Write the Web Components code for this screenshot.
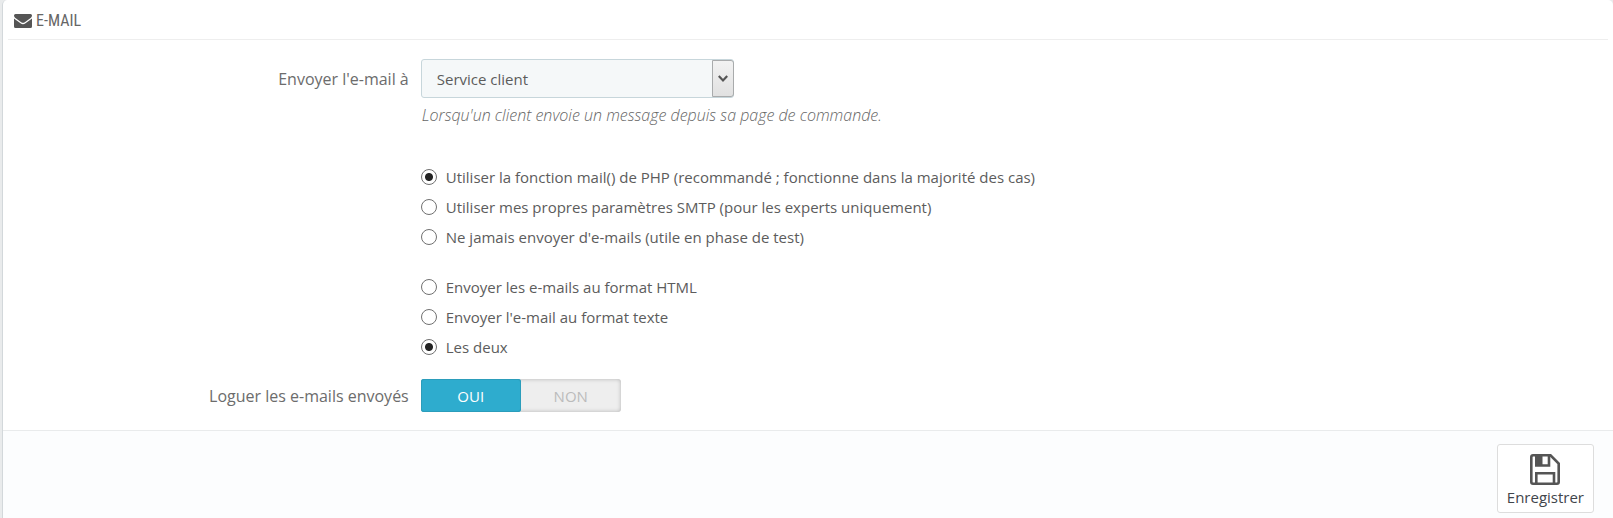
<!DOCTYPE html>
<html lang="fr">
<head>
<meta charset="utf-8">
<title>E-mail</title>
<style>
html, body { height: 100%; margin: 0; }
body { background: #e9ebec; font-family: "Open Sans", "Noto Sans", sans-serif; font-size: 15px; line-height: 20px; color: #5c5c5c; }
</style>
</head>
<body>
<settings-panel heading="E-MAIL">
  <form-row label="Envoyer l'e-mail à">
    <select-field label="Envoyer l'e-mail à"></select-field>
  </form-row>
  <form-row>
    <radio-group name="method" label="Méthode d'envoi" value="0"
      options="Utiliser la fonction mail() de PHP (recommandé ; fonctionne dans la majorité des cas)|Utiliser mes propres paramètres SMTP (pour les experts uniquement)|Ne jamais envoyer d'e-mails (utile en phase de test)"></radio-group>
  </form-row>
  <form-row>
    <radio-group name="format" label="Format des e-mails" value="2"
      options="Envoyer les e-mails au format HTML|Envoyer l'e-mail au format texte|Les deux"></radio-group>
  </form-row>
  <form-row label="Loguer les e-mails envoyés" compact>
    <toggle-switch label="Loguer les e-mails envoyés"></toggle-switch>
  </form-row>
  <save-button slot="footer">Enregistrer</save-button>
</settings-panel>
<script>
class BaseElement extends HTMLElement {
  render(html) {
    if (!this.shadowRoot) this.attachShadow({ mode: 'open' });
    this.shadowRoot.innerHTML = html;
  }
}

customElements.define('settings-panel', class extends BaseElement {
  connectedCallback() {
    this.render(`
      <style>
        :host { display: flex; flex-direction: column; box-sizing: border-box; min-height: 100%; margin-left: 2px; border-left: 1px solid #d3d8db; border-top-left-radius: 5px; border-top-right-radius: 5px; background: #fff; }
        header { display: flex; align-items: center; gap: 4px; height: 39px; margin: 0 5px; padding-left: 6px; border-bottom: 1px solid #eee; }
        header svg { margin-top: 3px; }
        h3 { margin: 0; padding-top: 3px; font: 400 16px/24px "Roboto Condensed", "Roboto", sans-serif; color: #666; }
        .body { display: grid; gap: 17px; padding: 19px 5px 18px 10px; }
        footer { flex: 1; display: flex; justify-content: flex-end; align-items: flex-start; padding: 13px 19px 4px; border-top: 1px solid #e9ebec; background: #fcfdfe; }
      </style>
      <header>
        <svg width="18" height="14" viewBox="0 0 18 14" aria-hidden="true" fill="#555">
          <path d="M1.5 0h15Q18 0 18 1.500C18 2.700 17.200 3.600 16.300 4.300L10.800 8.200Q9 9.500 7.200 8.200L1.700 4.300C.8 3.600 0 2.700 0 1.500Q0 0 1.500 0Z"/>
          <path d="M0 4.500Q.6 5.100 1.300 5.600L6.500 9.300Q9 11.100 11.500 9.300L16.700 5.600Q17.400 5.100 18 4.500V12.500Q18 14 16.500 14H1.500Q0 14 0 12.500Z"/>
        </svg>
        <h3>${this.getAttribute('heading')}</h3>
      </header>
      <div class="body"><slot></slot></div>
      <footer><slot name="footer"></slot></footer>`);
  }
});

customElements.define('form-row', class extends BaseElement {
  connectedCallback() {
    const label = this.getAttribute('label') || '';
    this.render(`
      <style>
        :host { display: grid; grid-template-columns: minmax(0, 1fr) minmax(0, 3fr); column-gap: 12px; }
        .label { padding-top: 8px; font-size: 16px; line-height: 24px; text-align: right; color: #6c6c6c; }
        :host([compact]) .label { padding-top: 5px; }
      </style>
      <div class="label">${label}</div>
      <slot></slot>`);
  }
});

customElements.define('select-field', class extends BaseElement {
  connectedCallback() {
    this.render(`
      <style>
        :host { display: block; padding-bottom: 17px; }
        .box { position: relative; width: 313px; max-width: 100%; }
        select { display: block; box-sizing: border-box; width: 100%; height: 39px; padding: 0 32px 0 15px; border: 1px solid #c7d6db; border-radius: 3px; background: #f5f8f9; color: #5c5c5c; font: inherit; appearance: none; }
        .arrow { position: absolute; top: 1px; right: 0; bottom: 1px; box-sizing: border-box; width: 22px; display: grid; place-items: center; border: 1px solid #a9abac; border-radius: 0 3px 3px 0; background: linear-gradient(#f2f2f2, #e1e1e1); pointer-events: none; }
        p { margin: 7px 0 0 1px; font-size: 16px; font-style: italic; font-weight: 300; color: #666; }
      </style>
      <div class="box">
        <select aria-label="${this.getAttribute('label')}" aria-describedby="help"><option>Service client</option></select>
        <span class="arrow"><svg width="10" height="8" viewBox="0 0 10 8" fill="none" stroke="#555" stroke-width="2.200"><path d="M.8 1L5 5.500 9.200 1"/></svg></span>
      </div>
      <p id="help">Lorsqu'un client envoie un message depuis sa page de commande.</p>`);
  }
});

customElements.define('radio-group', class extends BaseElement {
  connectedCallback() {
    const name = this.getAttribute('name');
    const value = Number(this.getAttribute('value'));
    const rows = this.getAttribute('options').split('|').map((text, i) => `
      <label for="${name}-${i}"><input type="radio" id="${name}-${i}" name="${name}"${i === value ? ' checked' : ''}>${text}</label>`).join('');
    this.render(`
      <style>
        :host { display: block; }
        .group { display: grid; justify-items: start; padding-top: 3px; }
        label { display: flex; align-items: center; gap: 9px; min-height: 30px; }
        input { flex: none; appearance: none; box-sizing: border-box; width: 16px; height: 16px; margin: 0; border: 1px solid #707070; border-radius: 50%; background: #fff; }
        input:checked { background: radial-gradient(circle, #222 0 3.500px, #fff 4.500px); }
      </style>
      <div class="group" role="radiogroup" aria-label="${this.getAttribute('label')}">${rows}</div>`);
  }
});

customElements.define('toggle-switch', class extends BaseElement {
  connectedCallback() {
    this.render(`
      <style>
        :host { display: block; }
        .switch { display: grid; grid-template-columns: 1fr 1fr; width: 200px; height: 33px; border-radius: 3px; background: #eee; box-shadow: inset 0 0 4px rgba(0,0,0,.25); }
        input { position: absolute; appearance: none; margin: 0; width: 0; height: 0; }
        label { display: grid; place-items: center; border-radius: 3px; color: #bbb; }
        input:checked + label { background: #2eacce; color: #fff; box-shadow: inset 0 0 0 1px #2b9dbb; }
      </style>
      <div class="switch" role="radiogroup" aria-label="${this.getAttribute('label')}">
        <input type="radio" name="log" id="on" checked><label for="on">OUI</label>
        <input type="radio" name="log" id="off"><label for="off">NON</label>
      </div>`);
  }
});

customElements.define('save-button', class extends BaseElement {
  connectedCallback() {
    this.render(`
      <style>
        :host { display: block; }
        button { display: grid; justify-items: center; gap: 1px; box-sizing: border-box; height: 69px; padding: 9px 9px 4px; border: 1px solid #ddd; border-radius: 3px; background: #fff; color: #41454b; font: inherit; line-height: 22px; }
      </style>
      <button type="submit">
        <svg width="30" height="31" viewBox="0 0 30 31" fill="none" stroke="#555" stroke-width="2.600" aria-hidden="true">
          <path d="M3 1.300H20.500L28.700 9.500V28Q28.700 29.700 27 29.700H3Q1.300 29.700 1.300 28V3Q1.300 1.300 3 1.300Z"/>
          <path d="M6.300 29V19.300H24V29"/>
          <path d="M6.300 2V11.500H19V2"/>
          <path d="M6 2H12.500V12H6Z" fill="#555" stroke="none"/>
        </svg>
        <slot></slot>
      </button>`);
  }
});
</script>
</body>
</html>
